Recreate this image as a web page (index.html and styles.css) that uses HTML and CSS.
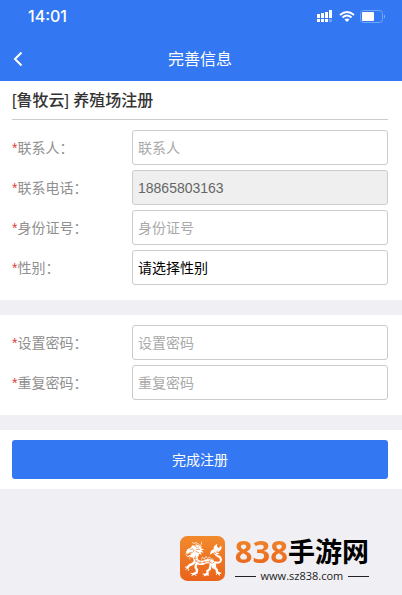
FILE: index.html
```html
<!DOCTYPE html>
<html lang="zh-CN">

<head>
  <meta charset="utf-8">
  <meta name="viewport" content="width=device-width, initial-scale=1">
  <title>完善信息</title>
  <link rel="stylesheet" href="styles.css">
</head>

<body>
  <header class="header">
    <div class="statusbar">
      <span class="time">14:01</span>
      <div class="status-icons">
        <svg width="18" height="14" viewBox="0 0 18 14" fill="#fff">
          <path d="M1 5h3v4H1zM5 4h3v5H5zM9 3h3v6H9zM13 1h3v8h-3z" />
          <path d="M1 10h3v3H1zM5 10h3v3H5zM9 10h3v3H9z" />
          <path d="M13 10h3v3h-3z" opacity=".3" />
        </svg>
        <svg width="16" height="13" viewBox="0 0 16 13" fill="none" stroke="#fff" stroke-width="2">
          <path d="M1 5Q8-1 15 5M3.500 7.500Q8 3.500 12.500 7.500" />
          <path d="M8 12L5.500 9.500Q8 7.500 10.500 9.500z" fill="#fff" stroke="none" />
        </svg>
        <svg width="26" height="13" viewBox="0 0 26 13" fill="none">
          <rect x=".5" y=".5" width="22" height="12" rx="3" stroke="#70a5f8" />
          <rect x="2" y="2" width="12" height="9" rx="1" fill="#fff" />
          <path d="M24 4.500q2 2 0 4z" fill="#8db8fa" />
        </svg>
      </div>
    </div>
    <div class="navbar">
      <button class="back" type="button" aria-label="返回">
        <svg width="10" height="16" viewBox="0 0 10 16" fill="none" stroke="#fff" stroke-width="2">
          <path d="M8.500 1.500L2 8l6.500 6.500" />
        </svg>
      </button>
      <h1 class="title">完善信息</h1>
    </div>
  </header>

  <form class="form">
    <section class="panel">
      <h2 class="heading">[鲁牧云] 养殖场注册</h2>
      <div class="row">
        <label class="label" for="name"><i>*</i>联系人：</label>
        <input class="field" id="name" type="text" placeholder="联系人">
      </div>
      <div class="row">
        <label class="label" for="phone"><i>*</i>联系电话：</label>
        <input class="field" id="phone" type="tel" value="18865803163" readonly>
      </div>
      <div class="row">
        <label class="label" for="idcard"><i>*</i>身份证号：</label>
        <input class="field" id="idcard" type="text" placeholder="身份证号">
      </div>
      <div class="row">
        <label class="label" for="gender"><i>*</i>性别：</label>
        <select class="field" id="gender">
          <option>请选择性别</option>
          <option>男</option>
          <option>女</option>
        </select>
      </div>
    </section>

    <section class="panel">
      <div class="row">
        <label class="label" for="password"><i>*</i>设置密码：</label>
        <input class="field" id="password" type="password" placeholder="设置密码">
      </div>
      <div class="row">
        <label class="label" for="repeat"><i>*</i>重复密码：</label>
        <input class="field" id="repeat" type="password" placeholder="重复密码">
      </div>
    </section>

    <section class="panel actions">
      <button class="submit" type="submit">完成注册</button>
    </section>
  </form>

  <footer class="brand">
    <svg class="logo" viewBox="0 0 135 135">
      <defs>
        <linearGradient id="orange" x1="0" y1="0" x2="0" y2="1">
          <stop offset="0" stop-color="#f28a2c" />
          <stop offset="1" stop-color="#e9631c" />
        </linearGradient>
      </defs>
      <rect width="135" height="135" rx="22" fill="url(#orange)" />
      <g fill="#fff">
        <!-- head and mane -->
        <path d="M18 48l4-8 10-5 5-7 8 1 8-3 5 5 9 1-5 4 11 5-9 1 7 8-10-2 5 8-9-3-1 8-7-5-5 7-8 2-6-4-9 3 2-5 8-2 4-4-8-2-5 3z" />
        <!-- tail flame -->
        <path d="M91 56q-2-12 10-16-2-10 11-17-3 9 3 13 7-2 8-8 5 11-4 17-6 5-12 4 6 3 12 2-8 6-16 2l-4-3z" />
      </g>
      <g fill="none" stroke="#fff" stroke-linecap="round" stroke-linejoin="round">
        <!-- neck, body and tail -->
        <path d="M50 54q-8 10-1 20 7 9 20 6 14-8 25-2 9 5 8 14" stroke-width="13" />
        <path d="M103 79q19 4 20-7 0-9-10-12-7-3-9-9" stroke-width="6" />
        <!-- legs -->
        <path d="M45 74q-3 11-16 13l-6 7M50 83q-7 11 1 18l-1 9-10 4M92 86l-3 14-7 5 1 9-8 2M101 90l9 11 1 7 6 4" stroke-width="7" />
        <!-- horns and whiskers -->
        <path d="M51 27q-5-6-14-7M61 30q-3-8-15-11M61 29q6-4 4-11M20 49q-6 7 0 11M32 61q-6 3-3 8M65 70l2-7 6 6 5-8 4 6 7-4 2 7 8-1 1 7" stroke-width="2" />
        <!-- claws -->
        <path d="M23 94l-7-1M23 94l-5 6M24 95l1 8M40 114l-7-2M40 114l-4 5M43 114l5 5M75 116l-6-2M77 116l-4 4M81 115l4 4M117 112l6-1M116 112l2 6M113 110l-4 6" stroke-width="3" />
      </g>
      <g fill="none" stroke="#ee7625" stroke-width="2" stroke-linecap="round">
        <path d="M31 41l7-3 3 5M47 32l8 4M49 41l10-1M47 46l9 4M29 50l9-1 4-4" />
        <path d="M46 60q-5 9 2 15 8 8 21 5 16-7 26 0M43 66l6 1M47 77l5-4M60 83v-6M74 80l-2-6M88 78l2-6M98 82l5-5M97 60l7-12M105 54l8-10" />
      </g>
    </svg>
    <div class="wordmark">
      <div class="name"><b>838</b><span>手游网</span></div>
      <div class="site">www.sz838.com</div>
    </div>
  </footer>
</body>

</html>
```

FILE: styles.css
```css
* {
  box-sizing: border-box;
  margin: 0;
  padding: 0
}

body {
  min-height: 100vh;
  background: #efeff4;
  color: #333;
  font: 14px/20px "Liberation Sans", "Noto Sans CJK SC", sans-serif
}

button,
input,
select {
  font: inherit
}

svg {
  display: block
}

.header {
  background: #3378f2;
  color: #fff
}

.statusbar {
  display: flex;
  align-items: center;
  justify-content: space-between;
  height: 32px;
  padding: 0 16px 0 28px
}

.time {
  font: 500 16px/20px Inter, sans-serif
}

.status-icons {
  display: flex;
  align-items: center;
  gap: 5px
}

.navbar {
  display: grid;
  grid-template-columns: 36px 1fr 38px;
  align-items: center;
  height: 49px;
  padding-top: 6px
}

.back {
  display: flex;
  justify-content: center;
  padding: 6px 0 8px;
  border: 0;
  background: none;
  cursor: pointer
}

.title {
  font-size: 16px;
  font-weight: 400;
  line-height: 24px;
  text-align: center
}

.form {
  display: flex;
  flex-direction: column;
  gap: 15px
}

.panel {
  display: flex;
  flex-direction: column;
  gap: 5px;
  padding: 10px 14px 15px 12px;
  background: #fff
}

.heading {
  margin-bottom: 5px;
  padding-bottom: 8px;
  border-bottom: 1px solid #ccc;
  font-size: 16px;
  font-weight: 500;
  line-height: 20px
}

.row {
  display: grid;
  grid-template-columns: 120px 1fr;
  align-items: center
}

.label {
  color: #8f8f8f
}

.label i {
  color: #d9403c;
  font-style: normal
}

.field {
  width: 100%;
  height: 35px;
  padding: 0 5px;
  border: 1px solid #ccc;
  border-radius: 3px;
  background: #fff;
  color: #000;
  appearance: none
}

.field::placeholder {
  color: #a9a9a9
}

.field:read-only:not(select) {
  background: #efefef;
  color: #666
}

.actions {
  padding-bottom: 10px
}

.submit {
  height: 39px;
  border: 0;
  border-radius: 3px;
  background: #3378f2;
  color: #fff;
  cursor: pointer
}

.brand {
  display: flex;
  align-items: center;
  justify-content: flex-end;
  gap: 10px;
  padding: 44px 33px 10px
}

.logo {
  width: 45px;
  height: 45px
}

.name {
  display: flex;
  align-items: center;
  height: 36px;
  color: #000;
  font: 700 27px/36px "Noto Sans CJK SC", sans-serif
}

.name b {
  background: linear-gradient(#f28a2c, #e9631c);
  background-clip: text;
  color: transparent;
  font: 700 31px/36px "Open Sans", sans-serif
}

.site {
  display: flex;
  align-items: center;
  gap: 5px;
  color: #222;
  font: 500 11px/14px "Open Sans", sans-serif
}

.site::before,
.site::after {
  content: "";
  flex: 1;
  height: 1px;
  background: #222
}
```
